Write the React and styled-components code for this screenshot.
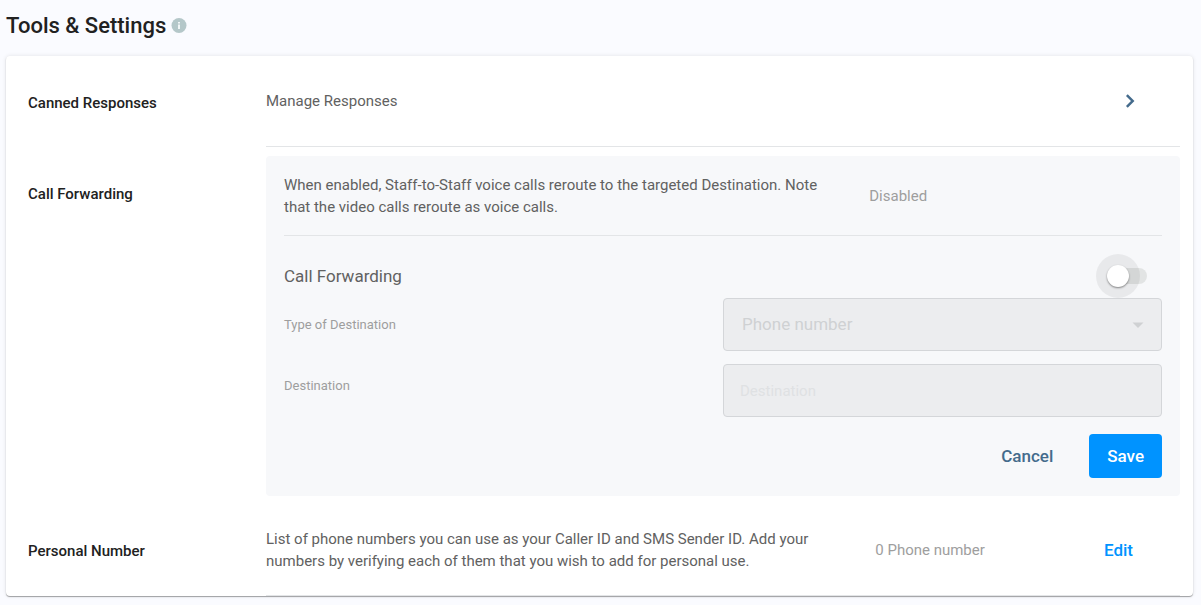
import React from 'react';
import styled, { createGlobalStyle } from 'styled-components';

const GlobalStyle = createGlobalStyle`
    * {
        box-sizing: border-box;
    }

    body {
        margin: 0;
        background: #fafbff;
        color: #212121;
        font-family: Roboto, 'Liberation Sans', sans-serif;
        font-size: 16px;
        line-height: 22px;
    }

    button,
    input,
    select {
        font-family: inherit;
    }
`;

const Page = styled.main`
    padding: 10px 8px 8px 6px;
`;

const PageHeader = styled.header`
    display: flex;
    align-items: center;
    gap: 5px;
    height: 32px;
    margin-bottom: 14px;
`;

const Title = styled.h1`
    margin: 0;
    font-size: 22px;
    font-weight: 500;
    line-height: 32px;
`;

const InfoIcon = styled.svg`
    display: block;
    width: 16px;
    height: 16px;
`;

const Card = styled.div`
    border-radius: 4px;
    background: #fff;
    box-shadow: 0 1px 1px rgba(0, 0, 0, 0.34), 0 0 4px rgba(0, 0, 0, 0.1);
`;

const Section = styled.section`
    display: grid;
    grid-template-columns: 238px minmax(0, 1fr);
    padding: 0 13px 0 22px;
`;

const SectionTitle = styled.h2`
    margin: 0;
    padding-top: ${(props) => props.$top};
    font-size: 15px;
    font-weight: 500;
    line-height: 22px;
`;

const SectionBody = styled.div`
    display: flex;
    align-items: center;
    min-height: ${(props) => props.$height};
    padding-top: ${(props) => props.$top || '0'};
    border-bottom: 1px solid #e3e5e7;
`;

const Description = styled.p`
    flex: 0 0 66.66%;
    margin: 0;
    padding-right: 32px;
    color: #616161;
    font-size: 15px;
`;

const Status = styled.span`
    color: #9e9e9e;
    font-size: 15px;
`;

const Actions = styled.div`
    margin-left: auto;
    padding-right: 37px;
`;

const IconButton = styled.button`
    display: block;
    padding: 0;
    border: 0;
    background: none;
    color: #446b8c;

    svg {
        display: block;
    }
`;

const Button = styled.button`
    height: 44px;
    padding: 0 ${(props) => props.$pad || '18px'};
    border: 0;
    border-radius: 4px;
    background: ${(props) => (props.$primary ? '#0093ff' : 'transparent')};
    color: ${(props) => props.$color || '#fff'};
    font-size: 17px;
    font-weight: 500;
`;

const Panel = styled.form`
    margin-top: 9px;
    padding: 18px;
    border-radius: 4px;
    background: #f7f8fa;
`;

const PanelHeader = styled.div`
    display: flex;
    align-items: center;
    padding-bottom: 17px;
    border-bottom: 1px solid #e3e5e7;
`;

const SwitchRow = styled.div`
    display: flex;
    align-items: center;
    justify-content: space-between;
    height: 44px;
    margin-top: 18px;
    padding-right: 15px;
`;

const SwitchLabel = styled.label`
    color: #616161;
    font-size: 17px;
`;

const Switch = styled.input`
    appearance: none;
    position: relative;
    width: 34px;
    height: 16px;
    margin: 0;
    border-radius: 8px;
    background: #e2e4e4;

    &::before,
    &::after {
        content: '';
        position: absolute;
        border-radius: 50%;
    }

    &::before {
        top: -14px;
        left: -17px;
        width: 44px;
        height: 44px;
        background: rgba(0, 0, 0, 0.06);
    }

    &::after {
        top: -3px;
        left: -6px;
        width: 22px;
        height: 22px;
        background: #fff;
        box-shadow: 0 1px 2px rgba(0, 0, 0, 0.45);
    }
`;

const Field = styled.div`
    display: grid;
    grid-template-columns: 1fr 1fr;
    align-items: center;

    & + & {
        margin-top: 4px;
    }
`;

const FieldLabel = styled.label`
    color: #9e9e9e;
    font-size: 13px;
`;

const Control = styled.div`
    position: relative;
    padding-top: ${(props) => props.$top || '0'};
`;

const Input = styled.input`
    display: block;
    width: 100%;
    height: 53px;
    padding: 0 16px;
    border: 1px solid #d4d6d9;
    border-radius: 4px;
    background: #ecedef;
    color: #dfe1e3;
    font-size: 15px;

    &::placeholder {
        color: #dfe1e3;
        opacity: 1;
    }
`;

const Select = styled(Input).attrs({ as: 'select' })`
    appearance: none;
    padding: 0 18px 2px;
    color: #cfd1d3;
    font-size: 17px;
    opacity: 1;
`;

const Arrow = styled.svg`
    position: absolute;
    top: 15px;
    right: 12px;
    pointer-events: none;
`;

const Footer = styled.div`
    display: flex;
    justify-content: flex-end;
    gap: 18px;
    margin-top: 17px;
`;

export default function App() {
    return (
        <React.Fragment>
            <GlobalStyle />
            <Page>
                <PageHeader>
                    <Title>Tools &amp; Settings</Title>
                    <InfoIcon viewBox="0 0 16 16" aria-hidden="true">
                        <circle cx="8" cy="7.5" r="7.5" fill="#b4c7c9" />
                        <path d="M7 4h2v1.6H7zM7 6.4h2V11H7z" fill="#f1f6f7" />
                    </InfoIcon>
                </PageHeader>
                <Card>
                    <Section>
                        <SectionTitle $top="36px">Canned Responses</SectionTitle>
                        <SectionBody $height="91px">
                            <Description>Manage Responses</Description>
                            <Actions>
                                <IconButton type="button" aria-label="Manage responses">
                                    <svg width="26" height="26" viewBox="0 0 24 24">
                                        <path
                                            d="M9.9 5.8L8.3 7.4 12.9 12l-4.6 4.6 1.6 1.6L16.1 12z"
                                            fill="currentColor"
                                        />
                                    </svg>
                                </IconButton>
                            </Actions>
                        </SectionBody>
                    </Section>
                    <Section>
                        <SectionTitle $top="36px">Call Forwarding</SectionTitle>
                        <Panel>
                            <PanelHeader>
                                <Description>
                                    When enabled, Staff-to-Staff voice calls reroute to the
                                    targeted Destination. Note that the video calls reroute as
                                    voice calls.
                                </Description>
                                <Status>Disabled</Status>
                            </PanelHeader>
                            <SwitchRow>
                                <SwitchLabel htmlFor="call-forwarding">
                                    Call Forwarding
                                </SwitchLabel>
                                <Switch id="call-forwarding" type="checkbox" role="switch" />
                            </SwitchRow>
                            <Field>
                                <FieldLabel htmlFor="destination-type">
                                    Type of Destination
                                </FieldLabel>
                                <Control>
                                    <Select id="destination-type" disabled>
                                        <option>Phone number</option>
                                    </Select>
                                    <Arrow width="24" height="24" viewBox="0 0 24 24">
                                        <path d="M6.5 9.5h11L12 15z" fill="#cfd1d3" />
                                    </Arrow>
                                </Control>
                            </Field>
                            <Field>
                                <FieldLabel htmlFor="destination">Destination</FieldLabel>
                                <Control $top="9px">
                                    <Input
                                        id="destination"
                                        type="text"
                                        placeholder="Destination"
                                        disabled
                                    />
                                </Control>
                            </Field>
                            <Footer>
                                <Button type="button" $color="#446b8c">
                                    Cancel
                                </Button>
                                <Button type="button" $primary>
                                    Save
                                </Button>
                            </Footer>
                        </Panel>
                    </Section>
                    <Section>
                        <SectionTitle $top="44px">Personal Number</SectionTitle>
                        <SectionBody $height="100px" $top="8px">
                            <Description>
                                List of phone numbers you can use as your Caller ID and SMS
                                Sender ID. Add your numbers by verifying each of them that you
                                wish to add for personal use.
                            </Description>
                            <Status>0 Phone number</Status>
                            <Actions>
                                <Button type="button" $color="#0093ff" $pad="10px">
                                    Edit
                                </Button>
                            </Actions>
                        </SectionBody>
                    </Section>
                </Card>
            </Page>
        </React.Fragment>
    );
}
